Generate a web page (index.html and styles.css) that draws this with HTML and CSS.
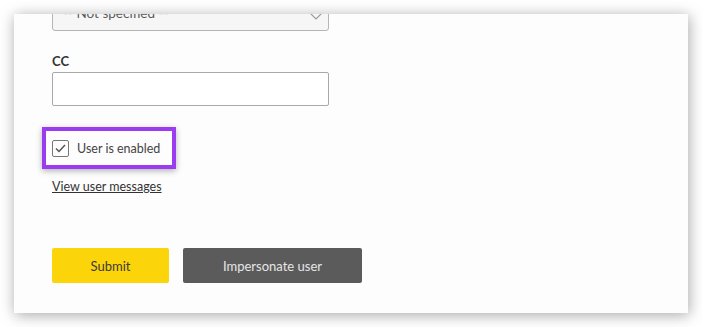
FILE: index.html
```html
<!DOCTYPE html>
<html>
<head>
<meta charset="utf-8">
<link rel="stylesheet" href="styles.css">
</head>
<body>
<div class="page">
  <div class="card">
    <div class="select">
      <span class="select-text">-- Not specified --</span>
      <svg class="chev" width="16" height="9" viewBox="0 0 16 9"><path d="M1 1 L8 8 L15 1" fill="none" stroke="#999" stroke-width="1.2"/></svg>
    </div>
    <label class="label">CC</label>
    <div class="input"></div>
    <div class="highlight">
      <span class="checkbox">
        <svg width="11" height="9" viewBox="0 0 11 9"><path d="M1 4.5 L4 7.5 L10 1" fill="none" stroke="#555" stroke-width="1.5"/></svg>
      </span>
      <span class="check-label">User is enabled</span>
    </div>
    <a class="link" href="#">View user messages</a>
    <div class="buttons">
      <button class="btn submit">Submit</button>
      <button class="btn impersonate">Impersonate user</button>
    </div>
  </div>
</div>
</body>
</html>
```
FILE: styles.css
```css
html, body {
  margin: 0;
  padding: 0;
  background: #ffffff;
  font-family: Lato, "Liberation Sans", sans-serif;
}
.page {
  width: 702px;
  height: 327px;
  padding: 14px 0 0 14px;
  box-sizing: border-box;
  overflow: hidden;
}
.card {
  width: 674px;
  height: 299px;
  background: #fdfdfd;
  box-shadow: 1px 2px 14px rgba(0, 0, 0, 0.35);
  overflow: hidden;
  padding-left: 38px;
  box-sizing: border-box;
  display: flex;
  flex-direction: column;
  align-items: flex-start;
}
.select {
  margin-top: -20px;
  width: 277px;
  height: 37px;
  box-sizing: border-box;
  border: 1px solid #b5b5b5;
  border-radius: 3px;
  background: #f6f6f6;
  display: flex;
  align-items: center;
  justify-content: space-between;
  padding: 0 4px 0 10px;
}
.select-text {
  font-size: 13.5px;
  color: #5a5a5a;
}
.chev {
  display: block;
  margin-top: 6px;
}
.label {
  margin-top: 22px;
  font-size: 13px;
  font-weight: bold;
  color: #333;
  line-height: 16px;
}
.input {
  margin-top: 3px;
  width: 277px;
  height: 34px;
  box-sizing: border-box;
  border: 1.5px solid #a8a8a8;
  border-radius: 2px;
  background: #fff;
}
.highlight {
  margin-top: 21px;
  margin-left: -10px;
  width: 134px;
  height: 42px;
  box-sizing: border-box;
  border: 4px solid #9b3cf0;
  background: #fdfdfd;
  box-shadow: 0 2px 6px rgba(0, 0, 0, 0.3);
  display: flex;
  align-items: center;
  padding-left: 6px;
  gap: 8px;
}
.checkbox {
  width: 17px;
  height: 17px;
  box-sizing: border-box;
  border: 1.5px solid #777;
  border-radius: 2px;
  display: flex;
  align-items: center;
  justify-content: center;
}
.checkbox svg {
  display: block;
}
.check-label {
  font-size: 12.5px;
  color: #444;
}
.link {
  margin-top: 11px;
  font-size: 12.5px;
  color: #333;
  text-decoration: underline;
  line-height: 14px;
}
.buttons {
  margin-top: 54px;
  display: flex;
  gap: 14px;
}
.btn {
  height: 35px;
  border: none;
  border-radius: 2px;
  font-family: Lato, "Liberation Sans", sans-serif;
  font-size: 13px;
  padding: 0;
}
.submit {
  width: 117px;
  background: #fcd40a;
  color: #3a3a3a;
}
.impersonate {
  width: 179px;
  background: #5b5b5b;
  color: #e6e6e6;
}
```
